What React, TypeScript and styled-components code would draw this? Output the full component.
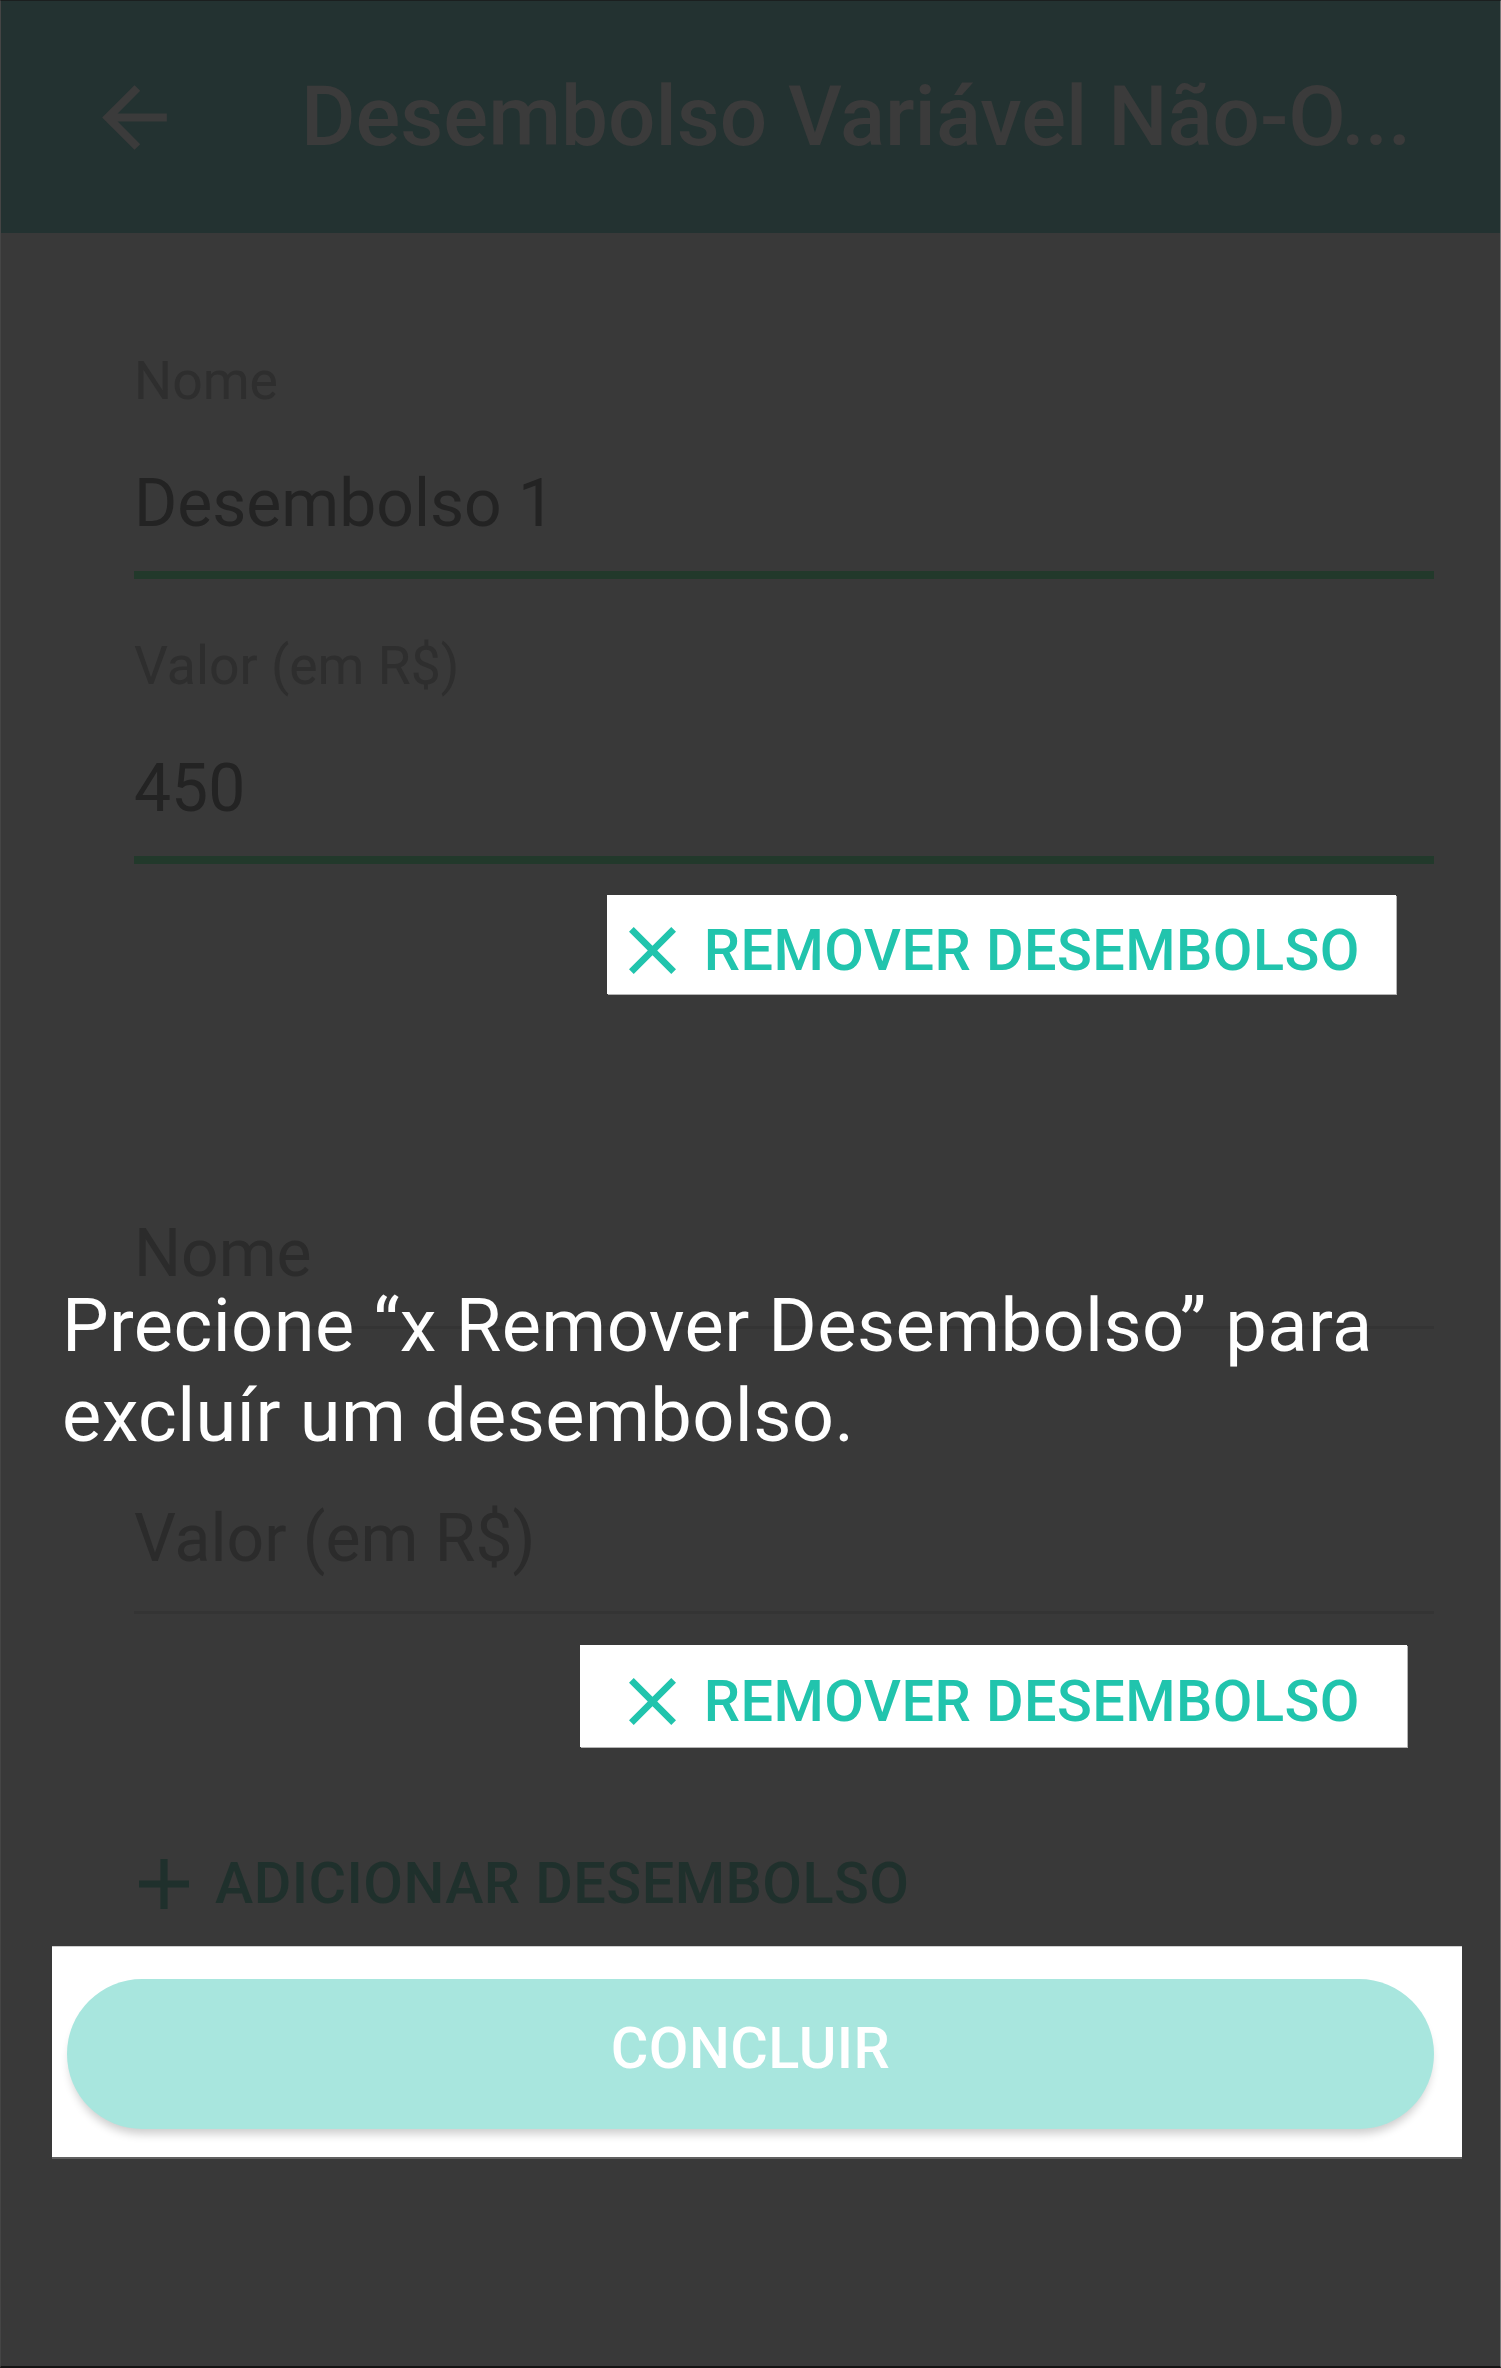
import React from 'react';
import styled, { createGlobalStyle } from 'styled-components';

const GlobalStyle = createGlobalStyle`
  html, body {
    margin: 0;
    padding: 0;
    background: #393939;
  }
  body {
    font-family: Roboto, "Noto Sans", "Liberation Sans", sans-serif;
  }
  * {
    box-sizing: border-box;
  }
`;

const Screen = styled.div`
  position: relative;
  width: 1501px;
  height: 2368px;
  background: #393939;
  border-top: 1px solid #1b1f1f;
  border-left: 1px solid #454545;
  border-right: 1px solid #7a7a7a;
  border-bottom: 2px solid #141414;
  overflow: hidden;
  display: flex;
  flex-direction: column;
`;

const Header = styled.header`
  height: 232px;
  flex: none;
  background: #233231;
  display: flex;
  align-items: center;
  padding-left: 85px;
`;

const BackIcon = styled.svg`
  width: 97px;
  height: 97px;
  flex: none;
  fill: #3b3b3b;
`;

const Title = styled.h1`
  margin: 0 0 0 118px;
  font-size: 83.6px;
  font-weight: 500;
  line-height: 1;
  color: #3b3b3b;
  white-space: nowrap;
`;

const Form = styled.main`
  display: flex;
  flex-direction: column;
  padding: 121px 66px 0 133px;
`;

const Field = styled.div<{ $gap: number }>`
  display: flex;
  flex-direction: column;
  margin-top: ${(p) => p.$gap}px;
`;

const FloatLabel = styled.div<{ $hidden?: boolean }>`
  font-size: 53.5px;
  line-height: 1;
  color: #2e2e2e;
  visibility: ${(p) => (p.$hidden ? 'hidden' : 'visible')};
`;

const Value = styled.div<{ $hint?: boolean }>`
  margin-top: 63.5px;
  font-size: 66px;
  line-height: 1;
  color: ${(p) => (p.$hint ? '#2b2b2b' : '#232323')};
`;

const Underline = styled.div<{ $focused?: boolean }>`
  margin-top: ${(p) => (p.$focused ? 34 : 39)}px;
  height: ${(p) => (p.$focused ? 8 : 3)}px;
  background: ${(p) => (p.$focused ? '#22392b' : '#343434')};
`;

const RemoveButton = styled.button<{ $pad: string; $right: number }>`
  align-self: flex-end;
  margin-top: 31px;
  margin-right: ${(p) => p.$right}px;
  display: flex;
  align-items: center;
  gap: 28px;
  padding: ${(p) => p.$pad};
  border: none;
  background: #ffffff;
  box-shadow: 1px 1px 0 #b5b5b5;
  font-family: inherit;
  font-size: 57.6px;
  font-weight: 500;
  letter-spacing: 0.45px;
  line-height: 1;
  color: #21c4ad;
  cursor: pointer;
`;

const CloseIcon = styled.svg`
  width: 47px;
  height: 47px;
  flex: none;
  fill: #21c4ad;
`;

const AddButton = styled.button`
  align-self: flex-start;
  margin-top: 108px;
  margin-left: 5px;
  display: flex;
  align-items: center;
  gap: 26px;
  padding: 0;
  border: none;
  background: transparent;
  font-family: inherit;
  font-size: 57.6px;
  font-weight: 500;
  letter-spacing: 0.45px;
  line-height: 1;
  color: #1f302c;
`;

const PlusIcon = styled.svg`
  width: 50px;
  height: 50px;
  flex: none;
  fill: #1f302c;
`;

const Footer = styled.footer`
  padding: 33px 0 0 51px;
`;

const Spotlight = styled.div`
  width: 1410px;
  background: #ffffff;
  border-top: 1px solid #cfcfcf;
  border-bottom: 2px solid #606060;
  padding: 32px 28px 28px 15px;
`;

const PrimaryButton = styled.button`
  display: flex;
  align-items: center;
  justify-content: center;
  width: 100%;
  height: 150px;
  border: none;
  border-radius: 75px;
  background: #a8e6de;
  box-shadow: 0 8px 10px -3px rgba(0, 0, 0, 0.2);
  padding: 0 0 9px 0;
  font-family: inherit;
  font-size: 57.6px;
  font-weight: 500;
  letter-spacing: 0.45px;
  line-height: 1;
  color: #ffffff;
`;

const Hint = styled.p`
  position: absolute;
  left: 61px;
  top: 1280px;
  width: 1400px;
  margin: 0;
  font-size: 74px;
  letter-spacing: 0.4px;
  line-height: 90px;
  font-weight: 400;
  color: #ffffff;
`;

const closePath =
  'M19 6.41L17.59 5 12 10.59 6.41 5 5 6.41 10.59 12 5 17.59 6.41 19 12 13.41 17.59 19 19 17.59 13.41 12z';

function Remove({ pad, right }: { pad: string; right: number }) {
  return (
    <RemoveButton $pad={pad} $right={right}>
      <CloseIcon viewBox="5 5 14 14">
        <path d={closePath} />
      </CloseIcon>
      REMOVER DESEMBOLSO
    </RemoveButton>
  );
}

export default function App() {
  return (
    <>
      <GlobalStyle />
      <Screen>
        <Header>
          <BackIcon viewBox="0 0 24 24">
            <path d="M20 11H7.83l5.59-5.59L12 4l-8 8 8 8 1.41-1.41L7.83 13H20v-2z" />
          </BackIcon>
          <Title>Desembolso Variável Não-O...</Title>
        </Header>

        <Form>
          <Field $gap={0}>
            <FloatLabel>Nome</FloatLabel>
            <Value>Desembolso 1</Value>
            <Underline $focused />
          </Field>
          <Field $gap={60}>
            <FloatLabel>Valor (em R$)</FloatLabel>
            <Value>450</Value>
            <Underline $focused />
          </Field>
          <Remove pad="27px 36px 14px 22px" right={38} />

          <Field $gap={110}>
            <FloatLabel $hidden>Nome</FloatLabel>
            <Value $hint>Nome</Value>
            <Underline />
          </Field>
          <Field $gap={60}>
            <FloatLabel $hidden>Valor (em R$)</FloatLabel>
            <Value $hint>Valor (em R$)</Value>
            <Underline />
          </Field>
          <Remove pad="28px 47px 17px 49px" right={27} />

          <AddButton>
            <PlusIcon viewBox="5 5 14 14">
              <path d="M19 13h-6v6h-2v-6H5v-2h6V5h2v6h6v2z" />
            </PlusIcon>
            ADICIONAR DESEMBOLSO
          </AddButton>
        </Form>

        <Footer>
          <Spotlight>
            <PrimaryButton>CONCLUIR</PrimaryButton>
          </Spotlight>
        </Footer>

        <Hint>Precione “x Remover Desembolso” para excluír um desembolso.</Hint>
      </Screen>
    </>
  );
}
